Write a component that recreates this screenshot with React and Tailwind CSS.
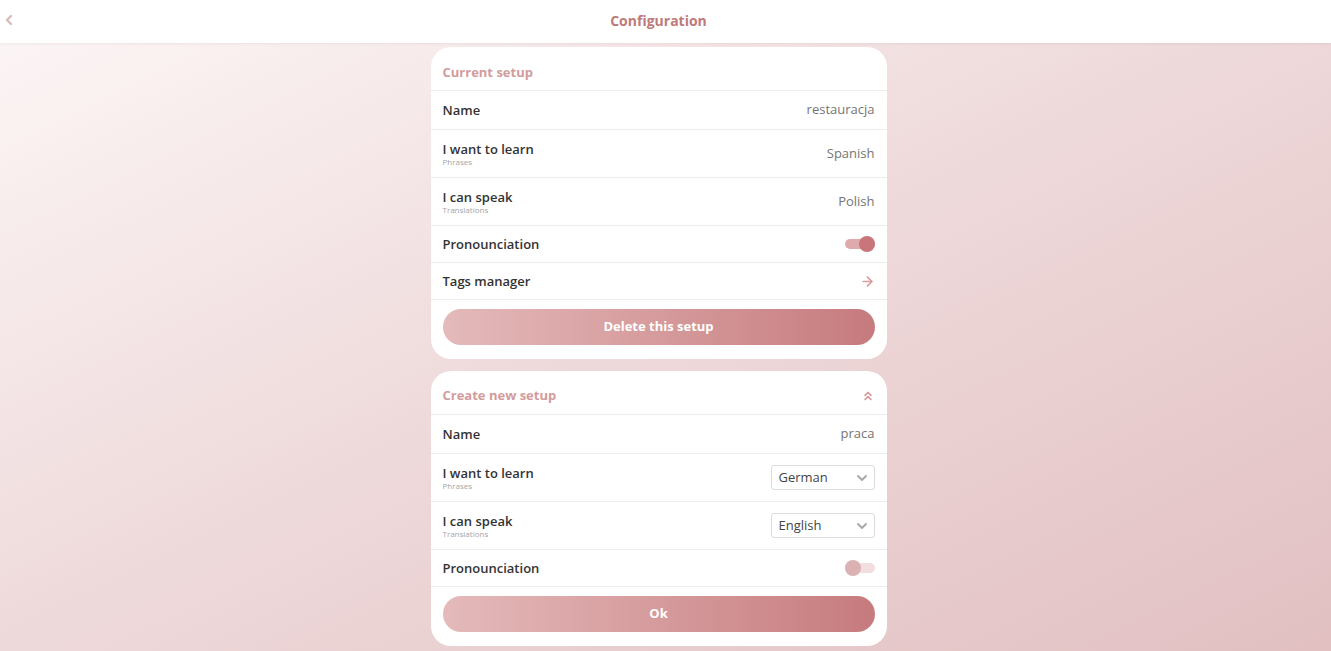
import React, { useState } from 'react';
import { ChevronLeft, ArrowRight, ChevronsUp, ChevronDown } from 'lucide-react';

function Row({ label, sub, children, h = 'h-[37px]' }) {
  return (
    <div className={`flex items-center justify-between px-3 border-t border-[#ececec] ${h}`}>
      <div className="flex flex-col">
        <span className="text-[13px] font-semibold text-[#333] leading-[16px]">{label}</span>
        {sub && <span className="text-[8px] text-[#a5a5a5] leading-[10px]">{sub}</span>}
      </div>
      {children}
    </div>
  );
}

function Toggle({ on }) {
  return (
    <div className="relative w-[30px] h-[16px] flex items-center">
      <div className={`w-full h-[10px] rounded-full ${on ? 'bg-[#dfaaab]' : 'bg-[#f1dfdf]'}`}></div>
      <div className={`absolute top-0 w-[16px] h-[16px] rounded-full ${on ? 'right-0 bg-[#c8767a]' : 'left-0 bg-[#dcb1b3]'}`}></div>
    </div>
  );
}

function Select({ value }) {
  return (
    <div className="w-[104px] h-[25px] border border-[#dcdcdc] rounded-[3px] flex items-center justify-between pl-[7px] pr-[4px] bg-white">
      <span className="text-[13px] text-[#444]">{value}</span>
      <ChevronDown size={16} strokeWidth={3} className="text-[#aaa]" />
    </div>
  );
}

function GradButton({ children }) {
  return (
    <div className="px-3 pt-[9px] pb-[14px] border-t border-[#ececec]">
      <button className="w-full h-[36px] rounded-full bg-gradient-to-r from-[#e4babb] to-[#c67b7e] text-white text-[13px] font-bold">
        {children}
      </button>
    </div>
  );
}

function Value({ children }) {
  return <span className="text-[13px] text-[#757575]">{children}</span>;
}

export default function App() {
  const [on] = useState(true);
  return (
    <div className="min-h-[651px] w-full bg-gradient-to-br from-[#fdf7f7] via-[#eed9da] to-[#e2c0c2] font-['Open_Sans',sans-serif]">
      <header className="h-[43px] bg-white shadow-[0_1px_3px_rgba(0,0,0,0.06)] flex items-center justify-center relative pr-[14px]">
        <ChevronLeft size={16} strokeWidth={3.5} className="absolute left-[1px] top-[12px] text-[#dbb9b9]" />
        <h1 className="text-[14px] font-bold text-[#c07a7b] -mt-[3px]">Configuration</h1>
      </header>

      <main className="flex flex-col items-center gap-[12px] pt-[4px] pb-[5px] pr-[14px]">
        <section className="w-[456px] bg-white rounded-[20px] overflow-hidden">
          <div className="h-[43px] flex items-center px-3 pt-[8px]">
            <h2 className="text-[13px] font-bold text-[#d39b9c]">Current setup</h2>
          </div>
          <Row label="Name" h="h-[39px]">
            <Value>restauracja</Value>
          </Row>
          <Row label="I want to learn" sub="Phrases" h="h-[48px]">
            <Value>Spanish</Value>
          </Row>
          <Row label="I can speak" sub="Translations" h="h-[48px]">
            <Value>Polish</Value>
          </Row>
          <Row label="Pronounciation">
            <Toggle on={on} />
          </Row>
          <Row label="Tags manager">
            <ArrowRight size={15} strokeWidth={2.5} className="text-[#d99a9c]" />
          </Row>
          <GradButton>Delete this setup</GradButton>
        </section>

        <section className="w-[456px] bg-white rounded-[20px] overflow-hidden">
          <div className="h-[43px] flex items-center justify-between px-3 pt-[6px]">
            <h2 className="text-[13px] font-bold text-[#d39b9c]">Create new setup</h2>
            <ChevronsUp size={14} strokeWidth={3} className="text-[#d99a9c]" />
          </div>
          <Row label="Name" h="h-[39px]">
            <Value>praca</Value>
          </Row>
          <Row label="I want to learn" sub="Phrases" h="h-[48px]">
            <Select value="German" />
          </Row>
          <Row label="I can speak" sub="Translations" h="h-[48px]">
            <Select value="English" />
          </Row>
          <Row label="Pronounciation">
            <Toggle on={false} />
          </Row>
          <GradButton>Ok</GradButton>
        </section>
      </main>
    </div>
  );
}
